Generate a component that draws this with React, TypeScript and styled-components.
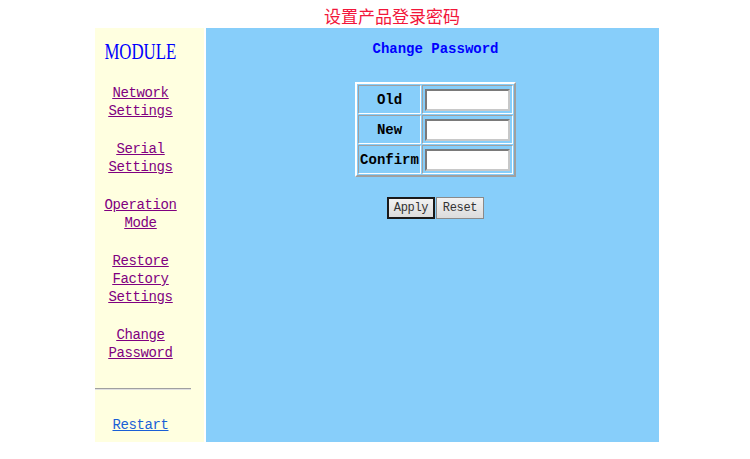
import { createGlobalStyle, styled } from "styled-components"

const GlobalStyle = createGlobalStyle`
  html, body {
    margin: 0;
    padding: 0;
    background: #ffffff;
  }
`

const menu = [
  ["Network", "Settings"],
  ["Serial", "Settings"],
  ["Operation", "Mode"],
  ["Restore", "Factory", "Settings"],
  ["Change", "Password"],
]

const fields = ["Old", "New", "Confirm"]

const App = () => {
  return (
    <>
      <GlobalStyle />
      <Page>
        <Heading>设置产品登录密码</Heading>
        <Frame>
          <Sidebar>
            <Brand>
              <span>MODULE</span>
            </Brand>
            <MenuList>
              {menu.map((lines) => (
                <MenuLink key={lines.join(" ")} href="#">
                  {lines.map((line) => (
                    <span key={line}>{line}</span>
                  ))}
                </MenuLink>
              ))}
            </MenuList>
            <Rule />
            <RestartLink href="#">Restart</RestartLink>
          </Sidebar>
          <Main>
            <FormTitle>Change Password</FormTitle>
            <PasswordTable>
              <tbody>
                {fields.map((name) => (
                  <tr key={name}>
                    <LabelCell>{name}</LabelCell>
                    <InputCell>
                      <PasswordInput type="password" />
                    </InputCell>
                  </tr>
                ))}
              </tbody>
            </PasswordTable>
            <ButtonRow>
              <FormButton $primary>Apply</FormButton>
              <FormButton>Reset</FormButton>
            </ButtonRow>
          </Main>
        </Frame>
      </Page>
    </>
  )
}

const Page = styled.div`
  width: 750px;
  height: 459px;
  display: flex;
  flex-direction: column;
`

const Heading = styled.div`
  height: 28px;
  padding-left: 34px;
  line-height: 32px;
  text-align: center;
  font-family: "Noto Sans CJK SC", sans-serif;
  font-size: 17px;
  color: #f2163a;
`

const Frame = styled.div`
  display: flex;
  gap: 2px;
  margin-left: 95px;
  width: 564px;
  height: 414px;
`

const Sidebar = styled.div`
  width: 109px;
  flex-shrink: 0;
  background: #ffffe0;
  display: flex;
  flex-direction: column;
  align-items: center;
  padding: 10px 18px 0 0;
  box-sizing: border-box;
`

const Brand = styled.div`
  height: 26px;
  line-height: 26px;
  font-family: "Liberation Serif", serif;
  font-size: 24px;
  color: #0000ff;

  span {
    display: inline-block;
    transform: scaleX(0.7);
  }
`

const MenuList = styled.div`
  display: flex;
  flex-direction: column;
  align-items: center;
  gap: 20px;
  margin-top: 20px;
`

const MenuLink = styled.a`
  display: flex;
  flex-direction: column;
  align-items: center;
  font-family: "Liberation Mono", monospace;
  font-size: 14px;
  letter-spacing: -0.4px;
  line-height: 18px;
  color: #800080;

  span {
    text-decoration: underline;
  }
`

const Rule = styled.div`
  align-self: flex-start;
  width: 96px;
  height: 1px;
  margin-top: 26px;
  background: #a0a0a0;
  border-bottom: 1px solid #e0e0e0;
`

const RestartLink = styled.a`
  margin-top: 26px;
  font-family: "Liberation Mono", monospace;
  font-size: 14px;
  letter-spacing: -0.4px;
  line-height: 18px;
  color: #1a5fd6;
  text-decoration: underline;
`

const Main = styled.div`
  flex: 1;
  background: #87cefa;
  display: flex;
  flex-direction: column;
  align-items: center;
  padding: 11px 0 0 6px;
`

const FormTitle = styled.div`
  line-height: 20px;
  font-family: "Liberation Mono", monospace;
  font-weight: bold;
  font-size: 14px;
  color: #0000ff;
`

const PasswordTable = styled.table`
  margin-top: 23px;
  border: 2px solid;
  border-color: #ffffff #a0a0a0 #a0a0a0 #ffffff;
  border-spacing: 1px;
`

const LabelCell = styled.td`
  width: 58px;
  height: 27px;
  padding: 0 1px;
  border: 1px solid;
  border-color: #a0a0a0 #ffffff #ffffff #a0a0a0;
  text-align: center;
  font-family: "Liberation Mono", monospace;
  font-weight: bold;
  font-size: 14px;
  color: #000000;
`

const InputCell = styled.td`
  padding: 2px;
  border: 1px solid;
  border-color: #a0a0a0 #ffffff #ffffff #a0a0a0;
`

const PasswordInput = styled.input`
  display: block;
  width: 85px;
  height: 22px;
  box-sizing: border-box;
  border: 2px solid;
  border-color: #7a7a7a #c8c8c8 #c8c8c8 #7a7a7a;
  background: #ffffff;
  padding: 0 2px;
`

const ButtonRow = styled.div`
  display: flex;
  gap: 1px;
  margin-top: 20px;
`

const FormButton = styled.button<{ $primary?: boolean }>`
  width: 48px;
  height: 22px;
  padding: 0;
  box-sizing: border-box;
  border: ${(p) => (p.$primary ? "2px solid #1a1a1a" : "1px solid #8a8a8a")};
  background: linear-gradient(#f2f2f2, #dcdcdc);
  font-family: "Liberation Mono", monospace;
  font-size: 12px;
  letter-spacing: -0.3px;
  color: #333333;
`

export default App
